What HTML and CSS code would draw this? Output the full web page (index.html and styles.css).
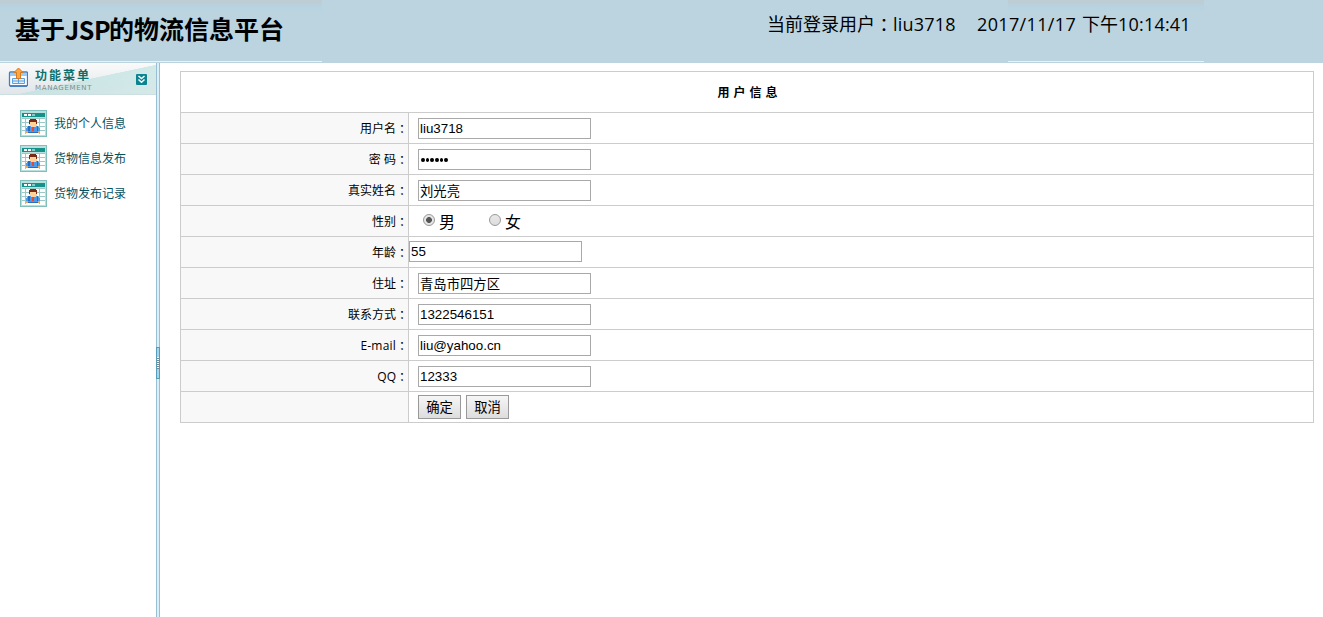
FILE: index.html
```html
<!DOCTYPE html>
<html lang="zh-CN">
<head>
<meta charset="utf-8">
<title>基于JSP的物流信息平台</title>
<link rel="stylesheet" href="styles.css">
</head>
<body>
<svg class="defs" width="0" height="0">
  <symbol id="person" viewBox="0 0 27 27" shape-rendering="crispEdges">
    <rect x=".5" y=".5" width="26" height="26" fill="#b8e0df" stroke="#80bfbc"/>
    <rect x="2" y="3" width="23" height="4" fill="#16918a"/>
    <path d="M4 4h3v2H4zM8 4h3v2H8z" fill="#fff"/><path d="M12 4h3v2h-3z" fill="#8bc9c5"/>
    <rect x="2" y="8" width="23" height="17" fill="#fff"/>
    <path d="M2 8.500h23M2 12.500h23M2 16.500h23M2 20.500h23M5.500 8v16M19.500 8v16" stroke="#9bc9c7" fill="none"/>
    <path d="M8 16h3l2 2 2-2h3l2 3v4H6v-4z" fill="#4e9aea"/>
    <path d="M8 16h2v5H8zM17 16h1v5h-1zM6 22h14v1H6z" fill="#286dbd"/>
    <path d="M9 11h8v4l-2 2h-4l-2-2z" fill="#ffd29b"/>
    <path d="M10 9h6v1h1v4h-1v-2h-6v2H9v-4h1z" fill="#782b12"/>
    <path d="M12 17h2v4h-2z" fill="#e34a35"/><path d="M6 21h2v2H6zM18 21h2v2h-2z" fill="#f4a747"/>
  </symbol>
</svg>
<header class="top">
  <div class="shade shade-left"></div>
  <div class="shade shade-right"></div>
  <h1 class="brand">基于<span class="brand-latin">JSP</span>的物流信息平台</h1>
  <div class="status"><span class="user">当前登录用户<span class="colon" lang="zh-TW">：</span><span class="account">liu3718</span></span><span class="date">2017/11/17</span><span class="noon">下午</span><span class="clock">10:14:41</span></div>
</header>
<div class="layout">
  <aside class="side">
    <div class="menu-head">
      <svg class="menu-icon" width="20" height="22" viewBox="0 0 20 22">
        <rect x="1.500" y="5" width="18" height="14" rx="1" fill="#fff" stroke="#3d7fc4" stroke-width="1.300"/>
        <path d="M2 6h17v3H2z" fill="#9bcaf1"/>
        <path d="M4.500 11.500h12v5h-12zM4.500 14h12M10.500 11.500v5" fill="#ddf0ff" stroke="#5e9fdd"/>
        <path d="M2 19h17" stroke="#2d68b2"/>
        <path d="M10.500 1l4.500 4.500h-2.500v6h-4v-6H6z" fill="#ffa63d" stroke="#d77a20"/>
      </svg>
      <div class="menu-title"><b>功能菜单</b><small>MANAGEMENT</small></div>
      <svg class="toggle" width="11" height="11" viewBox="0 0 11 11"><rect width="11" height="11" rx="1" fill="#0b8492"/><path d="M2.500 2l3 2.500 3-2.500M2.500 5.500l3 2.700 3-2.700" fill="none" stroke="#fff" stroke-width="1.500"/></svg>
    </div>
    <nav class="menu">
      <a class="item"><svg width="27" height="27"><use href="#person"/></svg><span>我的个人信息</span></a>
      <a class="item"><svg width="27" height="27"><use href="#person"/></svg><span>货物信息发布</span></a>
      <a class="item"><svg width="27" height="27"><use href="#person"/></svg><span>货物发布记录</span></a>
    </nav>
  </aside>
  <div class="splitter"><div class="grip"><i></i></div></div>
  <main class="main">
    <form class="form">
      <h2 class="form-title">用户信息</h2>
      <div class="row"><label class="label">用户名<span class="colon" lang="zh-TW">：</span></label><div class="cell"><input class="field" value="liu3718"></div></div>
      <div class="row"><label class="label">密 码<span class="colon" lang="zh-TW">：</span></label><div class="cell"><div class="field secret"><i></i><i></i><i></i><i></i><i></i><i></i></div></div></div>
      <div class="row"><label class="label">真实姓名<span class="colon" lang="zh-TW">：</span></label><div class="cell"><input class="field cjk" value="刘光亮"></div></div>
      <div class="row"><label class="label">性别<span class="colon" lang="zh-TW">：</span></label><div class="cell gender"><span class="choice"><i class="radio checked"></i>男</span><span class="choice"><i class="radio"></i>女</span></div></div>
      <div class="row"><label class="label">年龄<span class="colon" lang="zh-TW">：</span></label><div class="cell flush"><input class="field" value="55"></div></div>
      <div class="row"><label class="label">住址<span class="colon" lang="zh-TW">：</span></label><div class="cell"><input class="field cjk" value="青岛市四方区"></div></div>
      <div class="row"><label class="label">联系方式<span class="colon" lang="zh-TW">：</span></label><div class="cell"><input class="field" value="1322546151"></div></div>
      <div class="row"><label class="label"><span class="mail">E-mail</span><span class="colon" lang="zh-TW">：</span></label><div class="cell"><input class="field" value="liu@yahoo.cn"></div></div>
      <div class="row"><label class="label">QQ<span class="colon" lang="zh-TW">：</span></label><div class="cell"><input class="field" value="12333"></div></div>
      <div class="row"><div class="label"></div><div class="cell actions"><button type="button" class="btn">确定</button><button type="button" class="btn">取消</button></div></div>
    </form>
  </main>
</div>
</body>
</html>
```
FILE: styles.css
```css
* { box-sizing: border-box; }
body { margin: 0; height: 617px; overflow: hidden; background: #fff; color: #000; font: 12px "Open Sans", "Noto Sans CJK SC", sans-serif; }
.defs { position: absolute; }
.colon { font-family: "Noto Sans CJK TC", sans-serif; line-height: 1; vertical-align: -1px; }
.top { position: relative; display: flex; height: 63px; background: #bbd4e0; }
.shade { position: absolute; top: 0; height: 62px; border-bottom: 1px solid #e2f3fa; background: linear-gradient(#bccdd3 0, #bccfd7 4px, #b7d2e1 6px, #bbd4e0 12px); }
.shade-left { left: 0; width: 322px; }
.shade-right { left: 1008px; width: 196px; }
.brand { position: relative; display: flex; margin: 0; padding-left: 15px; width: 767px; font-size: 25px; line-height: 58px; font-weight: 700; white-space: nowrap; }
.brand-latin { width: 44px; font-family: "Noto Sans CJK SC", sans-serif; font-size: 25px; letter-spacing: -.4px; }
.status { position: relative; display: flex; font-size: 18px; line-height: 48px; white-space: nowrap; }
.user { width: 210px; }
.account { letter-spacing: .2px; }
.date { width: 105px; letter-spacing: .35px; }
.noon { width: 36px; }
.clock { letter-spacing: .2px; }
.layout { display: flex; height: 554px; }
.side { width: 156px; }
.menu-head { display: flex; align-items: flex-start; height: 32px; padding: 4px 0 0 8px; border-bottom: 1px solid #ccdfe1; background: linear-gradient(168deg, transparent 54%, #b9e1dfa0 55%, #d1eae8a0), linear-gradient(#fafafa, #e0e5e9); }
.menu-icon { flex: none; }
.menu-title { width: 108px; padding-left: 7px; color: #0b706c; }
.menu-title b { display: block; font-size: 12px; line-height: 17px; letter-spacing: 2px; }
.menu-title small { display: block; font: 7px/8px "DejaVu Sans", sans-serif; letter-spacing: .65px; color: #7d8e8e; }
.toggle { margin-top: 7px; flex: none; }
.menu { display: flex; flex-direction: column; gap: 8px; padding: 15px 0 0 20px; }
.item { display: flex; align-items: center; gap: 7px; height: 27px; color: #06525f; }
.item svg { flex: none; }
.item span { padding-bottom: 2px; }
.splitter { display: flex; align-items: flex-start; width: 4px; padding-top: 284px; background: linear-gradient(90deg, #9abfd0 1px, #d9effa 1px, #d9effa 3px, #9abfd0 3px); }
.grip { width: 4px; height: 32px; padding-top: 9px; border: 1px solid #559dba; background: #a6d5e9; }
.grip i { display: block; height: 12px; background: repeating-linear-gradient(#fff 0, #fff 1px, #788b94 1px, #788b94 2px); }
.main { flex: 1; padding: 8px 9px 0 20px; }
.form { border: 1px solid #ccc; border-bottom: 0; }
.form-title { height: 41px; margin: 0; padding-left: 5px; border-bottom: 1px solid #ccc; text-align: center; font-size: 12px; line-height: 41px; letter-spacing: 4px; }
.row { display: flex; height: 31px; border-bottom: 1px solid #ccc; }
.label { width: 228px; border-right: 1px solid #ccc; background: #f8f8f8; text-align: right; line-height: 31px; }
.mail { letter-spacing: .2px; }
.cell { flex: 1; padding: 5px 0 0 9px; }
.flush { padding: 4px 0 0; }
.field { display: block; width: 173px; height: 21px; margin: 0; padding: 1px; border: 1px solid #a9a9a9; border-radius: 0; background: #fff; font: 13.333px "Liberation Sans", "Noto Sans CJK SC", sans-serif; }
.cjk { padding: 0 1px; line-height: 19px; }
.secret { display: flex; align-items: center; gap: 1px; padding: 0 2px; }
.secret i { width: 3.700px; height: 4px; border-radius: 50%; background: #000; }
.gender { display: flex; padding: 0 0 0 14px; font-size: 16px; line-height: 32px; }
.choice { display: flex; width: 66px; gap: 4px; }
.radio { width: 12px; height: 12px; margin-top: 8px; border: 1px solid #999; border-radius: 50%; background: linear-gradient(#e8e8e8, #ddd); }
.checked { background: radial-gradient(circle, #555 0 2.600px, #e6e6e6 3.200px); }
.actions { display: flex; gap: 5px; padding-top: 3px; }
.btn { width: 43px; height: 24px; padding: 0; border: 1px solid #999; border-radius: 0; background: linear-gradient(#f6f6f6, #ddd); font: 13.333px/22px "Noto Sans CJK SC", sans-serif; color: #000; }
```
